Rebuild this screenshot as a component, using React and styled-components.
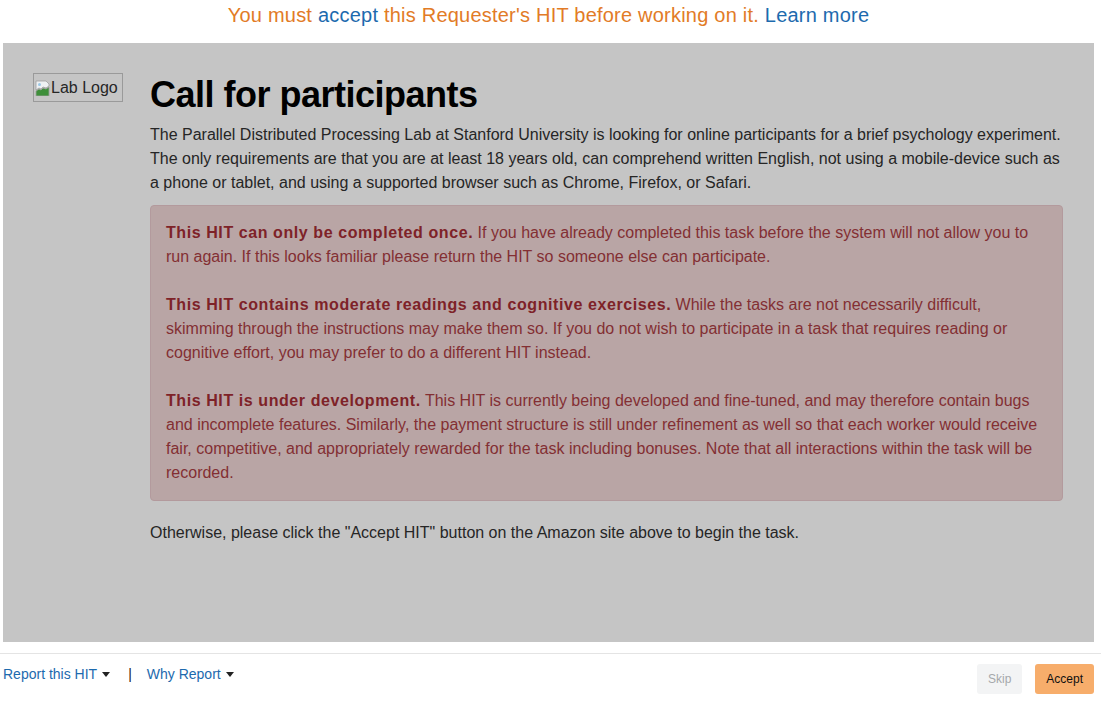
import React from 'react';
import styled, { createGlobalStyle } from 'styled-components';

const GlobalStyle = createGlobalStyle`
  html, body { margin: 0; padding: 0; background: #fff; }
  body { font-family: "Liberation Sans", Arial, sans-serif; }
`;

const Page = styled.div`
  width: 1101px;
  height: 701px;
  display: flex;
  flex-direction: column;
  overflow: hidden;
`;

const Banner = styled.div`
  height: 43px;
  display: flex;
  align-items: center;
  justify-content: center;
  padding-right: 4px;
  font-size: 20px;
  color: #e27b26;
  padding-bottom: 12px;
  box-sizing: border-box;
  letter-spacing: 0.22px;
`;

const Link = styled.a`
  color: #1d6aae;
  text-decoration: none;
  cursor: pointer;
`;

const Preview = styled.div`
  margin: 0 7px 0 3px;
  height: 599px;
  background: #c5c5c5;
  box-sizing: border-box;
  padding: 30px 31px 0 30px;
  display: flex;
`;

const LogoCol = styled.div`
  width: 117px;
  flex-shrink: 0;
`;

const BrokenImage = styled.span`
  display: inline-flex;
  align-items: center;
  width: 90px;
  height: 29px;
  box-sizing: border-box;
  border: 1px solid #9a9a9a;
  font-size: 16px;
  color: #262626;
  padding-left: 1px;
  white-space: nowrap;
  overflow: hidden;
`;

const Content = styled.div`
  flex: 1;
  color: #262626;
`;

const Title = styled.h1`
  margin: 0 0 7px;
  font-size: 36px;
  line-height: 43px;
  font-weight: bold;
  color: #000;
  letter-spacing: -0.5px;
`;

const Para = styled.p`
  margin: 0 0 ${p => p.$gap || 0}px;
  font-size: 16px;
  line-height: 24px;
`;

const Alert = styled.div`
  background: #b9a5a5;
  border: 1px solid #b39a9d;
  border-radius: 4px;
  padding: 15px;
  margin-bottom: 20px;
  color: #832f33;
`;

const AlertPara = styled.p`
  margin: 0 0 ${p => (p.$last ? 0 : 24)}px;
  font-size: 16px;
  line-height: 24px;
`;

const Strong = styled.strong`
  font-weight: bold;
  color: #7e2228;
  letter-spacing: 0.58px;
`;

const Footer = styled.div`
  margin-top: 11px;
  border-top: 1px solid #e4e4e4;
  display: flex;
  justify-content: space-between;
  align-items: flex-start;
  padding: 10px 7px 0 3px;
`;

const ReportLinks = styled.div`
  display: flex;
  align-items: center;
  font-size: 14px;
  padding-top: 2px;
`;

const Separator = styled.span`
  color: #222;
  margin: 0 15px 0 18px;
`;

const Caret = styled.span`
  display: inline-block;
  width: 0;
  height: 0;
  margin-left: 5px;
  vertical-align: middle;
  border-left: 4px solid transparent;
  border-right: 4px solid transparent;
  border-top: 5px solid #222;
  position: relative;
  top: -1px;
`;

const Buttons = styled.div`
  display: flex;
  gap: 13px;
`;

const Button = styled.button`
  height: 30px;
  padding: 0 11px;
  border: none;
  border-radius: 3px;
  font-family: "Liberation Sans", Arial, sans-serif;
  font-size: 12px;
  background: ${p => (p.$primary ? '#f7ad6b' : '#f3f4f5')};
  color: ${p => (p.$primary ? '#111' : '#a5a8ab')};
  cursor: pointer;
`;

const BrokenIcon = () => (
  <svg width="16" height="16" viewBox="0 0 16 16">
    <path d="M1 1h10l3 3v2l-3 2-3-1-2 2-2-1-3 2z" fill="#eef1f3" stroke="#a0a0a0" strokeWidth="0.8" />
    <path d="M1 11l3-2 2 1 2-2 3 1 3-2v9H1z" fill="#3e8f3a" stroke="#a0a0a0" strokeWidth="0.8" />
    <circle cx="4.5" cy="4.5" r="1.5" fill="#9cc7e6" />
  </svg>
);

export default function App() {
  return (
    <Page>
      <GlobalStyle />
      <Banner>
        <span>
          You must <Link>accept</Link> this Requester's HIT before working on it. <Link>Learn more</Link>
        </span>
      </Banner>
      <Preview>
        <LogoCol>
          <BrokenImage>
            <BrokenIcon />
            Lab Logo
          </BrokenImage>
        </LogoCol>
        <Content>
          <Title>Call for participants</Title>
          <Para $gap={10}>
            The Parallel Distributed Processing Lab at Stanford University is looking for online participants for a brief psychology experiment. The only requirements are that you are at least 18 years old, can comprehend written English, not using a mobile-device such as a phone or tablet, and using a supported browser such as Chrome, Firefox, or Safari.
          </Para>
          <Alert>
            <AlertPara>
              <Strong>This HIT can only be completed once.</Strong> If you have already completed this task before the system will not allow you to run again. If this looks familiar please return the HIT so someone else can participate.
            </AlertPara>
            <AlertPara>
              <Strong>This HIT contains moderate readings and cognitive exercises.</Strong> While the tasks are not necessarily difficult, skimming through the instructions may make them so. If you do not wish to participate in a task that requires reading or cognitive effort, you may prefer to do a different HIT instead.
            </AlertPara>
            <AlertPara $last>
              <Strong>This HIT is under development.</Strong> This HIT is currently being developed and fine-tuned, and may therefore contain bugs and incomplete features. Similarly, the payment structure is still under refinement as well so that each worker would receive fair, competitive, and appropriately rewarded for the task including bonuses. Note that all interactions within the task will be recorded.
            </AlertPara>
          </Alert>
          <Para>
            Otherwise, please click the "Accept HIT" button on the Amazon site above to begin the task.
          </Para>
        </Content>
      </Preview>
      <Footer>
        <ReportLinks>
          <Link>Report this HIT<Caret /></Link>
          <Separator>|</Separator>
          <Link>Why Report<Caret /></Link>
        </ReportLinks>
        <Buttons>
          <Button>Skip</Button>
          <Button $primary>Accept</Button>
        </Buttons>
      </Footer>
    </Page>
  );
}
